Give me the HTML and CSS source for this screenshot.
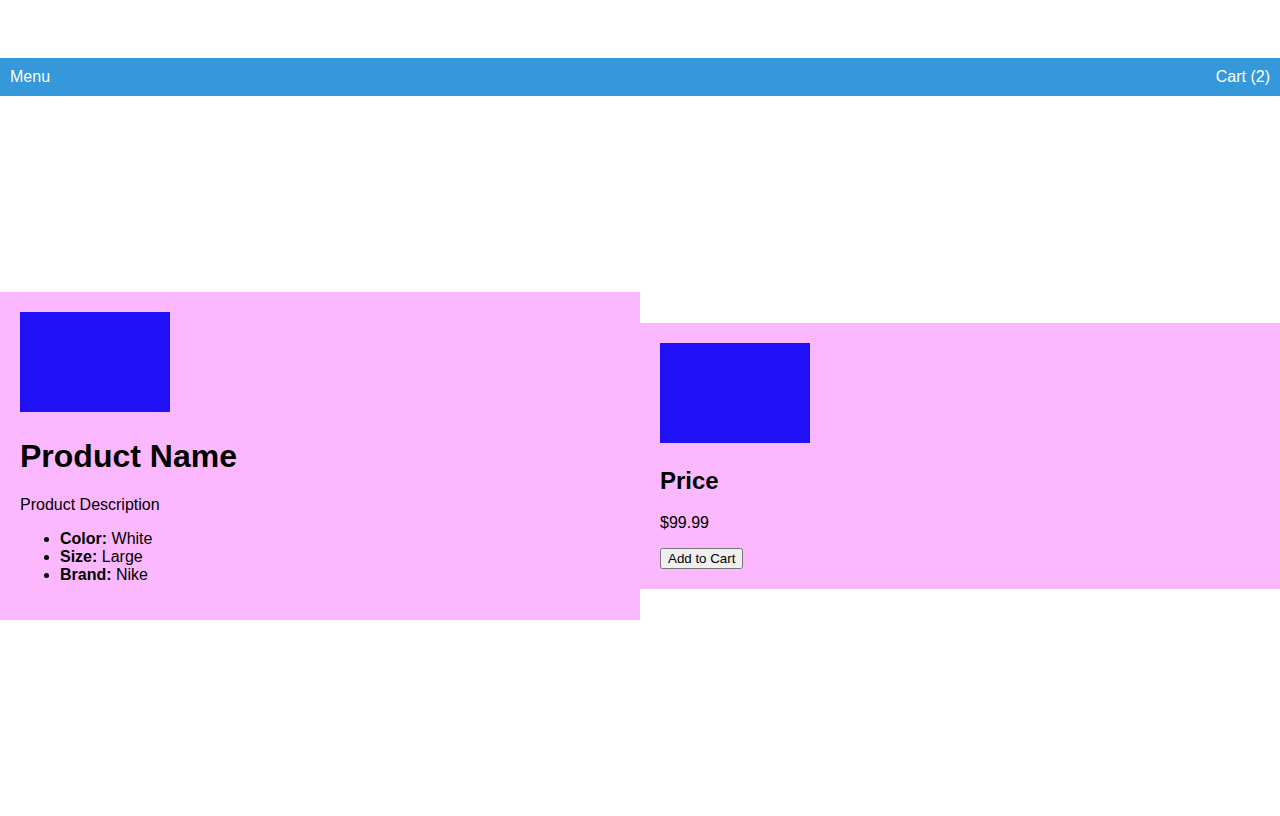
FILE: index.html
```html
<!DOCTYPE html>
<html lang="en">
<head>
<meta charset="utf-8">
<title>Product</title>
<link rel="stylesheet" href="styles.css">
</head>
<body>
<header class="topbar">
  <span class="topbar-link">Menu</span>
  <span class="topbar-link">Cart (2)</span>
</header>
<main class="product">
  <section class="panel">
    <div class="thumb-wrap"><span class="thumb"></span></div>
    <h1 class="title">Product Name</h1>
    <p class="desc">Product Description</p>
    <ul class="specs">
      <li><strong>Color:</strong> White</li>
      <li><strong>Size:</strong> Large</li>
      <li><strong>Brand:</strong> Nike</li>
    </ul>
  </section>
  <section class="panel">
    <div class="thumb-wrap"><span class="thumb"></span></div>
    <h2 class="price-title">Price</h2>
    <p class="price">$99.99</p>
    <button class="add-btn" type="button">Add to Cart</button>
  </section>
</main>
</body>
</html>
```

FILE: styles.css
```css
html, body {
  margin: 0;
  padding: 0;
}
body {
  font-family: "Liberation Sans", Arial, sans-serif;
  font-size: 16px;
  color: #000;
  background: #fff;
  padding-top: 58px;
}
.topbar {
  display: flex;
  justify-content: space-between;
  background: #3498db;
  color: #fff;
  padding: 10px;
  height: 18px;
  line-height: 18px;
}
.product {
  display: flex;
  align-items: center;
  height: 720px;
}
.panel {
  flex: 1 1 0;
  background: #fcb8fe;
  padding: 20px;
}
.thumb {
  display: inline-block;
  width: 150px;
  height: 100px;
  background: #2010f8;
}
.title {
  font-size: 32px;
  margin: 21.44px 0;
}
.price-title {
  font-size: 24px;
  margin: 19.92px 0;
}
.desc, .price {
  margin: 16px 0;
}
.specs {
  margin: 16px 0;
  padding-left: 40px;
}
.add-btn {
  font-family: "Liberation Sans", Arial, sans-serif;
  font-size: 13.333px;
}
```
